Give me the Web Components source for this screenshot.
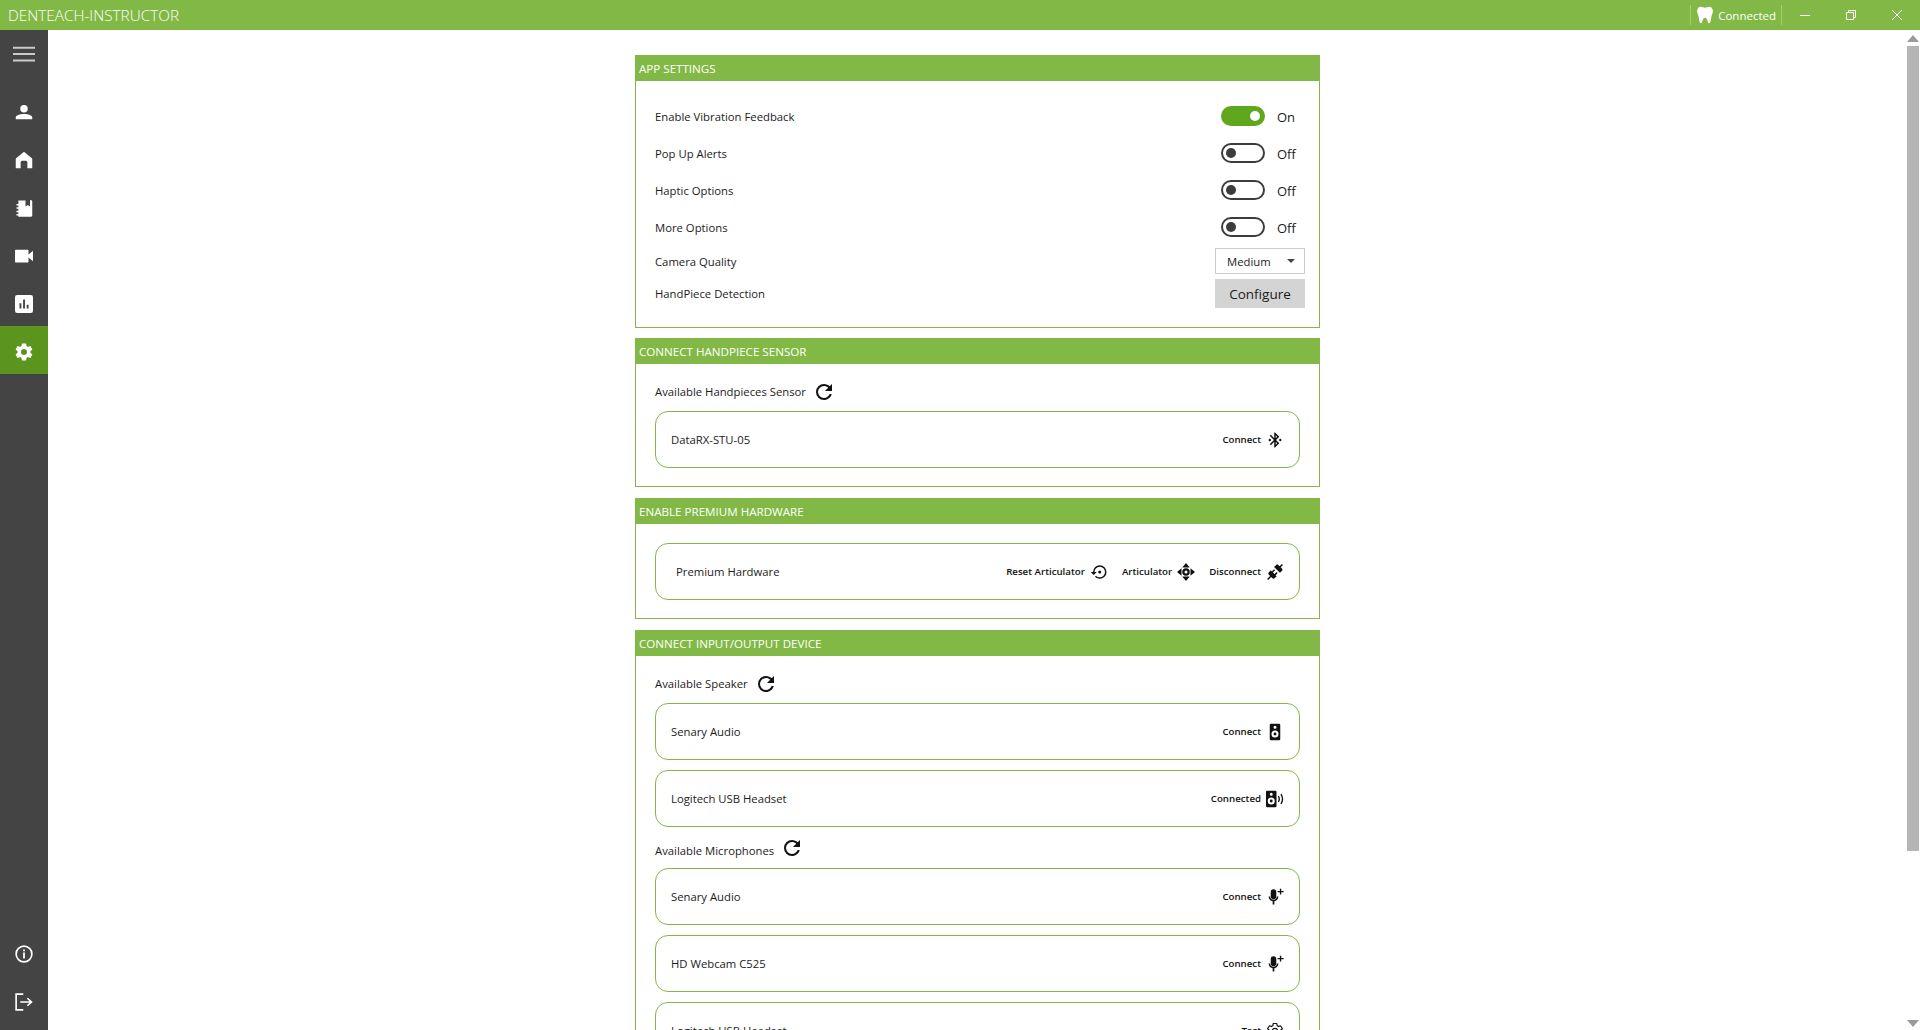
<!DOCTYPE html>
<html>
<head>
<meta charset="utf-8">
<title>DENTEACH-INSTRUCTOR</title>
<style>
html, body { margin:0; height:100%; overflow:hidden; background:#fff; }
body { font-family:"Open Sans","Liberation Sans",sans-serif; color:#1b1b1b; }
</style>
</head>
<body>
<dt-app>
  <dt-titlebar slot="top" heading="DENTEACH-INSTRUCTOR"></dt-titlebar>
  <dt-sidebar slot="side">
    <dt-navitem icon="menu" wide></dt-navitem>
    <dt-navitem icon="person"></dt-navitem>
    <dt-navitem icon="home"></dt-navitem>
    <dt-navitem icon="book"></dt-navitem>
    <dt-navitem icon="video"></dt-navitem>
    <dt-navitem icon="chart"></dt-navitem>
    <dt-navitem icon="cog" active></dt-navitem>
    <dt-navitem icon="info" slot="bottom"></dt-navitem>
    <dt-navitem icon="exit" slot="bottom"></dt-navitem>
  </dt-sidebar>

  <dt-panel heading="APP SETTINGS" style="--pad:17px 0 19px">
    <dt-row label="Enable Vibration Feedback"><dt-toggle on></dt-toggle></dt-row>
    <dt-row label="Pop Up Alerts"><dt-toggle></dt-toggle></dt-row>
    <dt-row label="Haptic Options"><dt-toggle></dt-toggle></dt-row>
    <dt-row label="More Options"><dt-toggle></dt-toggle></dt-row>
    <dt-row label="Camera Quality" style="--h:26px;margin:2px 0 5px"><dt-select value="Medium"></dt-select></dt-row>
    <dt-row label="HandPiece Detection" style="--h:29px"><dt-button>Configure</dt-button></dt-row>
  </dt-panel>

  <dt-panel heading="CONNECT HANDPIECE SENSOR" style="--pad:18px 19px 18px;margin-top:-1px">
    <dt-listhead label="Available Handpieces Sensor"></dt-listhead>
    <dt-device name="DataRX-STU-05">
      <dt-action icon="bluetooth">Connect</dt-action>
    </dt-device>
  </dt-panel>

  <dt-panel heading="ENABLE PREMIUM HARDWARE" style="--pad:19px 19px 18px">
    <dt-device name="Premium Hardware" style="--name-pad:20px">
      <dt-action icon="restore">Reset Articulator</dt-action>
      <dt-action icon="move">Articulator</dt-action>
      <dt-action icon="plug">Disconnect</dt-action>
    </dt-device>
  </dt-panel>

  <dt-panel heading="CONNECT INPUT/OUTPUT DEVICE" style="--pad:18px 19px 0">
    <dt-listhead label="Available Speaker"></dt-listhead>
    <dt-device name="Senary Audio"><dt-action icon="speaker">Connect</dt-action></dt-device>
    <dt-device name="Logitech USB Headset" style="margin-top:10px"><dt-action icon="speakerwaves">Connected</dt-action></dt-device>
    <dt-listhead label="Available Microphones" raised style="margin:14px 0 7px"></dt-listhead>
    <dt-device name="Senary Audio"><dt-action icon="micplus">Connect</dt-action></dt-device>
    <dt-device name="HD Webcam C525" style="margin-top:10px"><dt-action icon="micplus">Connect</dt-action></dt-device>
    <dt-device name="Logitech USB Headset" style="margin-top:10px"><dt-action icon="cogline">Test</dt-action></dt-device>
  </dt-panel>
</dt-app>

<script>
// icons are all on a 24 box, fill is currentColor unless the shape says otherwise
const COG = 'M12,15.5A3.5,3.5 0 0,1 8.5,12A3.5,3.5 0 0,1 12,8.5A3.5,3.5 0 0,1 15.5,12A3.5,3.5 0 0,1 12,15.5M19.43,12.97C19.47,12.65 19.5,12.33 19.5,12C19.5,11.67 19.47,11.34 19.43,11L21.54,9.37C21.73,9.22 21.78,8.95 21.66,8.73L19.66,5.27C19.54,5.05 19.27,4.96 19.05,5.05L16.56,6.05C16.04,5.66 15.5,5.32 14.87,5.07L14.5,2.42C14.46,2.18 14.25,2 14,2H10C9.75,2 9.54,2.18 9.5,2.42L9.13,5.07C8.5,5.32 7.96,5.66 7.44,6.05L4.95,5.05C4.73,4.96 4.46,5.05 4.34,5.27L2.34,8.73C2.21,8.95 2.27,9.22 2.46,9.37L4.57,11C4.53,11.34 4.5,11.67 4.5,12C4.5,12.33 4.53,12.65 4.57,12.97L2.46,14.63C2.27,14.78 2.21,15.05 2.34,15.27L4.34,18.73C4.46,18.95 4.73,19.03 4.95,18.95L7.44,17.94C7.96,18.34 8.5,18.68 9.13,18.93L9.5,21.58C9.54,21.82 9.75,22 10,22H14C14.25,22 14.46,21.82 14.5,21.58L14.87,18.93C15.5,18.67 16.04,18.34 16.56,17.94L19.05,18.95C19.27,19.03 19.54,18.95 19.66,18.73L21.66,15.27C21.78,15.05 21.73,14.78 21.54,14.63L19.43,12.97Z';
const MIC = 'M10 1.500a3.700 3.700 0 0 1 3.700 3.700v6.100a3.700 3.700 0 0 1-7.400 0V5.200a3.700 3.700 0 0 1 3.700-3.700ZM16.500 11.200c0 3.200-2.500 5.900-5.400 6.300V22H8.900v-4.500c-2.900-.4-5.400-3.100-5.400-6.300h2c0 2.500 2 4.500 4.500 4.500s4.500-2 4.500-4.500Z';
const ICONS = {
    menu: '<path d="M0 4h24v2.200H0zM0 11h24v2.200H0zM0 18h24v2.200H0z" fill-opacity=".72"/>',
    person: '<path d="M12,2.500A5,5 0 0,1 17,7.500A5,5 0 0,1 12,12.500A5,5 0 0,1 7,7.500A5,5 0 0,1 12,2.500M12,14.500C18,14.500 23,16.500 23,19V21.500H1V19C1,16.500 6,14.500 12,14.500Z"/>',
    home: '<path d="M12 1 22.500 9.500c.3.300.5.700.5 1.100V23h-6.500v-8a2 2 0 0 0-2-2h-5a2 2 0 0 0-2 2v8H1V10.600c0-.4.200-.8.500-1.100Z"/>',
    book: '<path fill-rule="evenodd" d="M4.500 2H14v8l3-2 3 2V1.500h1.500c.9 0 1.500.7 1.500 1.500v19c0 .8-.6 1.500-1.500 1.500h-17V22h-2.500v-2h2.500v-2.500h-2.500v-2h2.500V13h-2.500v-2h2.500V8.500h-2.500v-2h2.500Z"/>',
    video: '<path d="M18,10V4.500A1,1 0 0,0 17,3.500H1A1,1 0 0,0 0,4.500V19.500A1,1 0 0,0 1,20.500H17A1,1 0 0,0 18,19.500V14L24,19V5L18,10Z"/>',
    chart: '<path fill-rule="evenodd" d="M3 0h18a3 3 0 0 1 3 3v18a3 3 0 0 1-3 3H3a3 3 0 0 1-3-3V3a3 3 0 0 1 3-3ZM6 11v7h2.500v-7Zm4.800-5v12h2.500V6Zm4.800 7v5h2.500v-5Z"/>',
    cog: `<path d="${COG}" transform="translate(-1.700 -1.700) scale(1.140)"/>`,
    info: '<circle cx="12" cy="12" r="10.500" fill="none" stroke="currentColor" stroke-width="2.200"/><path d="M10.800 10h2.400v8h-2.400zM10.800 6h2.400v2.400h-2.400z"/>',
    exit: '<path d="M11 1.500H1.500v21H11" fill="none" stroke="currentColor" stroke-width="2.200"/><path d="M7 12h14.500M16.500 7l5.500 5-5.500 5" fill="none" stroke="currentColor" stroke-width="2.200"/>',
    refresh: '<path d="M17.65,6.35C16.2,4.9 14.21,4 12,4A8,8 0 0,0 4,12A8,8 0 0,0 12,20C15.73,20 18.84,17.45 19.73,14H17.65C16.83,16.33 14.61,18 12,18A6,6 0 0,1 6,12A6,6 0 0,1 12,6C13.66,6 15.14,6.69 16.22,7.78L13,11H20V4L17.65,6.35Z"/>',
    bluetooth: '<path d="M19,10L17,12L19,14L21,12M14.88,16.29L13,18.17V14.41M13,5.83L14.88,7.71L13,9.58M17.71,7.71L12,2H11V9.58L6.41,5L5,6.41L10.59,12L5,17.58L6.41,19L11,14.41V22H12L17.71,16.29L13.41,12M7,12L5,10L3,12L5,14L7,12Z"/>',
    restore: '<path d="M13,3A9,9 0 0,0 4,12H1L4.89,15.89L4.96,16.03L9,12H6A7,7 0 0,1 13,5A7,7 0 0,1 20,12A7,7 0 0,1 13,19C11.07,19 9.32,18.21 8.06,16.94L6.64,18.36C8.27,20 10.5,21 13,21A9,9 0 0,0 22,12A9,9 0 0,0 13,3M15,12A2,2 0 0,0 13,10A2,2 0 0,0 11,12A2,2 0 0,0 13,14A2,2 0 0,0 15,12Z"/>',
    move: '<path fill-rule="evenodd" d="M12 0 17 6H7ZM12 24l-5-6h10ZM0 12l6-5v10ZM24 12l-6 5V7ZM12 7a5 5 0 1 1 0 10 5 5 0 0 1 0-10Zm0 3a2 2 0 1 0 0 4 2 2 0 0 0 0-4Z"/>',
    plug: '<path d="M21.4 7.5C22.2 8.3 22.2 9.6 21.4 10.3L18.6 13.1L10.8 5.3L13.6 2.5C14.4 1.7 15.7 1.7 16.4 2.5L18.2 4.3L21.2 1.3L22.6 2.7L19.6 5.7L21.4 7.5M15.6 13.3L14.2 11.9L11.4 14.7L9.3 12.6L12.1 9.8L10.7 8.4L7.9 11.2L6.4 9.8L3.6 12.6C2.8 13.4 2.8 14.7 3.6 15.4L5.4 17.2L1.4 21.2L2.8 22.6L6.8 18.6L8.6 20.4C9.4 21.2 10.7 21.2 11.4 20.4L14.2 17.6L12.8 16.2L15.6 13.3Z"/>',
    speaker: '<path fill-rule="evenodd" d="M6.500 1h11A1.500 1.500 0 0 1 19 2.500v19a1.500 1.500 0 0 1-1.500 1.500h-11A1.500 1.500 0 0 1 5 21.500v-19A1.500 1.500 0 0 1 6.500 1ZM12 3.500a2 2 0 1 0 0 4 2 2 0 0 0 0-4Zm0 6.500a4.700 4.700 0 1 0 0 9.400 4.700 4.700 0 0 0 0-9.400Zm0 2.800a1.900 1.900 0 1 1 0 3.800 1.900 1.900 0 0 1 0-3.800Z"/>',
    speakerwaves: '<path fill-rule="evenodd" d="M1.500 1h11A1.500 1.500 0 0 1 14 2.500v19a1.500 1.500 0 0 1-1.500 1.500h-11A1.500 1.500 0 0 1 0 21.500v-19A1.500 1.500 0 0 1 1.500 1ZM7 3.500a2 2 0 1 0 0 4 2 2 0 0 0 0-4Zm0 6.500a4.700 4.700 0 1 0 0 9.400 4.700 4.700 0 0 0 0-9.400Zm0 2.800a1.900 1.900 0 1 1 0 3.800 1.900 1.900 0 0 1 0-3.800Z"/><path d="M16.500 8c1.500 2.500 1.500 5.500 0 8M20 5.500c2.500 4 2.500 9 0 13" fill="none" stroke="currentColor" stroke-width="1.800"/>',
    micplus: `<path d="${MIC}"/><path d="M18.500 1h1.800v3H23.500v1.800h-3.200v3h-1.800v-3h-3V4h3Z"/>`,
    cogline: `<path d="${COG}" fill="none" stroke="currentColor" stroke-width="1.600"/>`,
    tooth: '<path d="M6.500 1C3.500 1 1.500 3.500 1.500 7c0 3 1.500 4.500 2 7 .5 3 .8 9 3 9 2.300 0 1.800-7.500 5.500-7.500S15.200 23 17.500 23c2.200 0 2.500-6 3-9 .5-2.500 2-4 2-7 0-3.500-2-6-5-6-2.500 0-3.500 1.300-5.500 1.300S9 1 6.500 1Z"/>'
};

// small base so the classes below don't all repeat attachShadow
class ShadowEl extends HTMLElement {
    constructor(html) {
        super();
        this.attachShadow({ mode: 'open' }).innerHTML = html;
    }
}

customElements.define('dt-icon', class extends ShadowEl {
    static get observedAttributes() { return ['name']; }
    constructor() {
        super(`<style>
        :host { display:inline-flex; width:var(--size,16px); height:var(--size,16px); flex:none; }
        svg { width:100%; height:100%; fill:currentColor; display:block; }
        </style><svg viewBox="0 0 24 24"></svg>`);
    }
    attributeChangedCallback(attr, old, name) {
        this.shadowRoot.querySelector('svg').innerHTML = ICONS[name] || '';
    }
});

customElements.define('dt-app', class extends ShadowEl {
    constructor() {
        super(`<style>
        :host { display:flex; flex-direction:column; height:100vh; }
        #body { flex:1; display:flex; min-height:0; }
        #scroll { flex:1; min-width:0; overflow:hidden; display:flex; flex-direction:column; align-items:center; gap:11px; padding-top:25px; }
        </style>
        <slot name="top"></slot>
        <div id="body">
            <slot name="side"></slot>
            <div id="scroll"><slot></slot></div>
            <dt-scrollbar></dt-scrollbar>
        </div>`);
    }
});

customElements.define('dt-titlebar', class extends ShadowEl {
    constructor() {
        super(`<style>
        :host { display:flex; align-items:center; height:30px; background:#82b946; color:#fff; flex:none; }
        #title { font-size:15.3px; font-weight:300; padding-left:8px; flex:1; }
        #status { display:flex; align-items:center; height:20px; border:solid #a5cd78; border-width:0 1px; padding:0 5px; font-size:11.5px; gap:4px; }
        #status dt-icon { --size:18px; }
        .win { width:46px; height:30px; display:flex; align-items:center; justify-content:center; }
        .win svg { width:10px; height:10px; fill:none; stroke:#fff; stroke-width:1; display:block; }
        #wins { display:flex; }
        </style>
        <div id="title"></div>
        <div id="status"><dt-icon name="tooth"></dt-icon><span>Connected</span></div>
        <div id="wins">
            <div class="win"><svg viewBox="0 0 10 10"><path d="M0 5.500h10"/></svg></div>
            <div class="win"><svg viewBox="0 0 10 10"><path d="M.5 2.500h7v7h-7zM2.500 2.500v-2h7v7h-2"/></svg></div>
            <div class="win"><svg viewBox="0 0 10 10"><path d="M0 0l10 10M10 0L0 10"/></svg></div>
        </div>`);
    }
    connectedCallback() {
        this.shadowRoot.querySelector('#title').textContent = this.getAttribute('heading');
    }
});

customElements.define('dt-sidebar', class extends ShadowEl {
    constructor() {
        super(`<style>
        :host { display:flex; flex-direction:column; width:48px; flex:none; background:#444; box-sizing:border-box; padding-bottom:6px; }
        #spacer { flex:1; }
        </style><slot></slot><div id="spacer"></div><slot name="bottom"></slot>`);
    }
});

customElements.define('dt-navitem', class extends ShadowEl {
    constructor() {
        super(`<style>
        :host { display:flex; align-items:center; justify-content:center; height:48px; box-sizing:border-box; padding-top:3px; color:#fff; flex:none; --size:18px; }
        :host([active]) { background:#5c951e; }
        :host([wide]) { --size:22px; height:47px; padding-top:0; margin-bottom:9px; }
        </style><dt-icon></dt-icon>`);
    }
    connectedCallback() {
        this.shadowRoot.querySelector('dt-icon').setAttribute('name', this.getAttribute('icon'));
    }
});

customElements.define('dt-panel', class extends ShadowEl {
    constructor() {
        super(`<style>
        :host { display:block; width:685px; flex:none; box-sizing:border-box; }
        #head { height:26px; background:#82b946; color:#fff; font-size:11.6px; font-weight:500; line-height:27px; padding-left:4px; }
        #body { border:1px solid #82b946; border-top:0; padding:var(--pad); }
        </style><div id="head"></div><div id="body"><slot></slot></div>`);
    }
    connectedCallback() {
        this.shadowRoot.querySelector('#head').textContent = this.getAttribute('heading');
    }
});

customElements.define('dt-row', class extends ShadowEl {
    constructor() {
        super(`<style>
        :host { display:flex; align-items:center; justify-content:space-between; height:var(--h,37px); padding:0 14px 0 19px; font-size:11.3px; }
        </style><span id="lbl"></span><slot></slot>`);
    }
    connectedCallback() {
        this.shadowRoot.querySelector('#lbl').textContent = this.getAttribute('label');
    }
});

customElements.define('dt-toggle', class extends ShadowEl {
    constructor() {
        super(`<style>
        :host { display:flex; align-items:center; font-size:13px; width:84px; }
        #track { width:44px; height:20px; box-sizing:border-box; border:2px solid #3c3c3c; border-radius:10px; position:relative; flex:none; margin:0 12px 2px 0; }
        #dot { position:absolute; left:3px; top:3px; width:10px; height:10px; border-radius:50%; background:#3c3c3c; }
        :host([on]) #track { background:#5fa81e; border-color:#5fa81e; }
        :host([on]) #dot { left:auto; right:3px; background:#fff; }
        </style><div id="track"><div id="dot"></div></div><span id="txt"></span>`);
    }
    connectedCallback() {
        this.shadowRoot.querySelector('#txt').textContent = this.hasAttribute('on') ? 'On' : 'Off';
    }
});

customElements.define('dt-select', class extends ShadowEl {
    constructor() {
        super(`<style>
        :host { display:flex; align-items:center; justify-content:space-between; width:90px; height:26px; box-sizing:border-box; border:1px solid #ccc; padding:0 9px 0 11px; font-size:11.3px; }
        i { width:0; height:0; border:4px solid transparent; border-top:4px solid #444; border-bottom:0; }
        </style><span id="v"></span><i></i>`);
    }
    connectedCallback() {
        this.shadowRoot.querySelector('#v').textContent = this.getAttribute('value');
    }
});

customElements.define('dt-button', class extends ShadowEl {
    constructor() {
        super(`<style>
        :host { display:flex; align-items:center; justify-content:center; width:90px; height:29px; background:#d4d4d4; font-size:13.5px; }
        </style><slot></slot>`);
    }
});

customElements.define('dt-listhead', class extends ShadowEl {
    constructor() {
        super(`<style>
        :host { display:flex; align-items:center; height:20px; margin-bottom:9px; gap:6px; font-size:11.3px; --size:24px; color:#1b1b1b; }
        #lbl { padding-bottom:2px; }
        dt-icon { color:#111; margin:-2px 0; }
        :host([raised]) dt-icon { position:relative; top:-3px; }
        </style><span id="lbl"></span><dt-icon name="refresh"></dt-icon>`);
    }
    connectedCallback() {
        this.shadowRoot.querySelector('#lbl').textContent = this.getAttribute('label');
    }
});

customElements.define('dt-device', class extends ShadowEl {
    constructor() {
        super(`<style>
        :host { display:flex; align-items:center; justify-content:space-between; height:57px; box-sizing:border-box; border:1px solid #82b946; border-radius:13px; padding:0 15px 0 var(--name-pad,15px); font-size:11.3px; }
        #acts { display:flex; gap:14px; }
        </style><span id="n"></span><div id="acts"><slot></slot></div>`);
    }
    connectedCallback() {
        this.shadowRoot.querySelector('#n').textContent = this.getAttribute('name');
    }
});

customElements.define('dt-action', class extends ShadowEl {
    constructor() {
        super(`<style>
        :host { display:flex; align-items:center; gap:5px; font-size:9.7px; font-weight:600; color:#111; --size:18px; }
        </style><span><slot></slot></span><dt-icon></dt-icon>`);
    }
    connectedCallback() {
        this.shadowRoot.querySelector('dt-icon').setAttribute('name', this.getAttribute('icon'));
    }
});

customElements.define('dt-scrollbar', class extends ShadowEl {
    constructor() {
        super(`<style>
        :host { display:flex; flex-direction:column; align-items:center; width:13px; flex:none; padding-right:1px; box-sizing:border-box; }
        .up, .dn { width:0; height:0; border:6px solid transparent; }
        .up { border-bottom:7px solid #9a9a9a; border-top:0; margin-top:5px; }
        .dn { border-top:7px solid #9a9a9a; border-bottom:0; margin-bottom:3px; }
        #thumb { width:12px; height:805px; background:#b5b5b5; margin-top:4px; }
        #rest { flex:1; }
        </style><div class="up"></div><div id="thumb"></div><div id="rest"></div><div class="dn"></div>`);
    }
});
</script>
</body>
</html>
